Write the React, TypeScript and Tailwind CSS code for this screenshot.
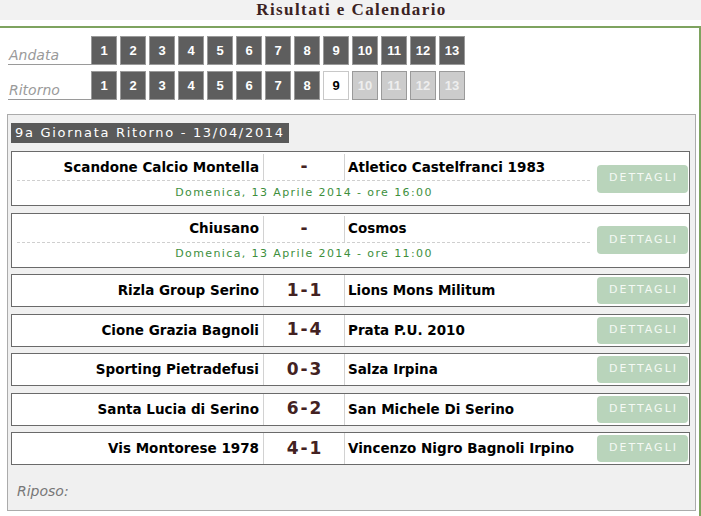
import React from 'react';

const verdana = "font-['DejaVu_Sans','Verdana',sans-serif]";

type Match = {
  home: string;
  away: string;
  score: string;
  date?: string;
};

const matches: Match[] = [
  { home: 'Scandone Calcio Montella', away: 'Atletico Castelfranci 1983', score: '-', date: 'Domenica, 13 Aprile 2014 - ore 16:00' },
  { home: 'Chiusano', away: 'Cosmos', score: '-', date: 'Domenica, 13 Aprile 2014 - ore 11:00' },
  { home: 'Rizla Group Serino', away: 'Lions Mons Militum', score: '1-1' },
  { home: 'Cione Grazia Bagnoli', away: 'Prata P.U. 2010', score: '1-4' },
  { home: 'Sporting Pietradefusi', away: 'Salza Irpina', score: '0-3' },
  { home: 'Santa Lucia di Serino', away: 'San Michele Di Serino', score: '6-2' },
  { home: 'Vis Montorese 1978', away: 'Vincenzo Nigro Bagnoli Irpino', score: '4-1' },
];

const rounds = Array.from({ length: 13 }, (_, i) => i + 1);

function RoundRow({ label, current }: { label: string; current?: number }) {
  return (
    <div className="flex items-end">
      <div className={`w-[83px] ml-[8px] border-b border-[#9a9a9a] text-[14px] leading-[18px] italic text-[#9a9a9a] pl-[1px] ${verdana}`}>
        {label}
      </div>
      {rounds.map((n) => {
        let cls = 'bg-[#5e5e5e] text-white';
        if (current && n === current) cls = 'bg-white text-black border-[#c8c8c8]';
        else if (current && n > current) cls = 'bg-[#cccccc] text-[#eeeeee]';
        return (
          <div
            key={n}
            className={`w-[26px] h-[29px] mr-[3px] border border-[#9a9a9a] flex items-center justify-center font-['Liberation_Sans',Arial,sans-serif] font-bold text-[13px] ${cls}`}
          >
            {n}
          </div>
        );
      })}
    </div>
  );
}

function MatchRow({ m }: { m: Match }) {
  const tall = !!m.date;
  return (
    <div className={`w-[679px] border border-[#6a6a6a] bg-white flex ${tall ? 'h-[55px]' : 'h-[33px]'}`}>
      <div className="w-[578px] flex flex-col">
        <div className={`flex ${tall ? 'mt-[2px] h-[26px]' : 'h-[31px]'} ${verdana} text-[13.5px] font-bold text-black`}>
          <div className="w-[252px] border-r border-[#d2d2d2] flex items-center justify-end pr-[4px]">{m.home}</div>
          <div className="w-[81px] border-r border-[#d2d2d2] flex items-center justify-center text-[17px] tracking-[2px] pl-[2px] text-[#432222]">
            {m.score}
          </div>
          <div className="flex-1 flex items-center pl-[3px] whitespace-nowrap">{m.away}</div>
        </div>
        {tall && (
          <>
            <div className="ml-[5px] border-t border-dashed border-[#cfcfcf]" />
            <div className={`h-[24px] flex items-center justify-center pl-[6px] text-[11px] tracking-[1.4px] text-[#3d8f3d] ${verdana}`}>
              {m.date}
            </div>
          </>
        )}
      </div>
      <div className="flex-1 flex items-center justify-end pr-[1px]">
        <div
          className={`w-[91px] ${tall ? 'h-[28px]' : 'h-[27px]'} rounded-[4px] bg-[#b9d4bb] text-[#f4f9f4] flex items-center justify-center text-[11px] tracking-[2px] pl-[2px] ${verdana}`}
        >
          DETTAGLI
        </div>
      </div>
    </div>
  );
}

export default function App() {
  return (
    <div className="w-[701px] h-[516px] bg-white overflow-hidden">
      {/* Header */}
      <div className="h-[20px] bg-[#f2f2f2] flex items-center justify-center">
        <span className="font-['Liberation_Serif','Times_New_Roman',serif] font-bold text-[17px] tracking-[1.4px] text-[#3b2222] pl-[2px]">
          Risultati e Calendario
        </span>
      </div>
      <div className="h-[6px]" />

      {/* Content */}
      <div className="w-[701px] h-[600px] border-t-2 border-r-2 border-[#7ea35f] pt-[8px]">
        <RoundRow label="Andata" />
        <div className="h-[6px]" />
        <RoundRow label="Ritorno" current={9} />

        {/* Giornata panel */}
        <div className="ml-[7px] mt-[14px] w-[689px] border border-[#ababab] bg-[#f0f0f0] pt-[8px] pl-[3px]">
          <div className={`flex w-fit items-center h-[20px] bg-[#5a5a5a] text-white text-[13px] tracking-[1.7px] px-[4px] ${verdana}`}>
            9a Giornata Ritorno - 13/04/2014
          </div>
          <div className="mt-[8px] flex flex-col gap-[6.5px]">
            {matches.map((m, i) => (
              <MatchRow key={i} m={m} />
            ))}
          </div>
          <div className={`mt-[16px] pl-[6px] h-[20px] pb-[9px] box-content leading-[20px] text-[14px] italic text-[#777777] ${verdana}`}>
            Riposo:
          </div>
        </div>
      </div>
    </div>
  );
}
